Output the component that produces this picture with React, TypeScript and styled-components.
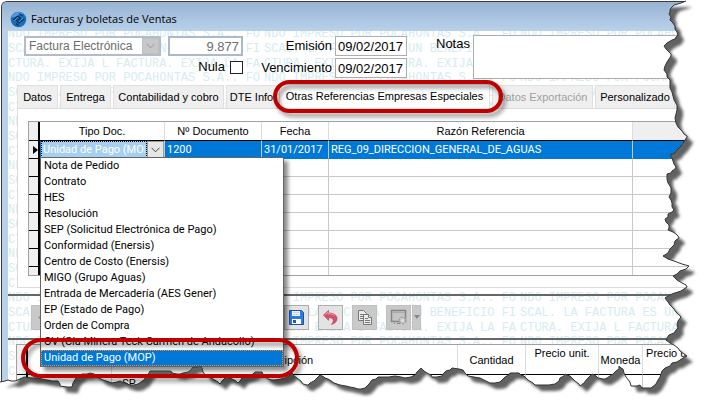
import React from "react";
import styled, { createGlobalStyle, css } from "styled-components";

const Global = createGlobalStyle`
  * { box-sizing: border-box; }
  body { margin: 0; background: #fff; overflow: hidden; }
  button, input, select, textarea { font: inherit; color: inherit; margin: 0; border-radius: 0; }
`;

const Page = styled.main`
  position: relative;
  min-height: 100vh;
  padding: 1px 0 0 1px;
  overflow: hidden;
  font: 11px/16px "Liberation Sans", Arial, sans-serif;
  color: #000;
`;

const Window = styled.section`
  border: 1px solid #3c3a40;
  border-width: 1px 0 0 1px;
  border-top-left-radius: 6px;
  background: #b9d1ea;
  overflow: hidden;
`;

const TitleBar = styled.header`
  height: 29px;
  display: flex;
  align-items: center;
  gap: 4px;
  padding: 5px 0 0 8px;
  background: linear-gradient(#98b4d3, #b9d1ea);
`;

const Title = styled.h1`
  margin: 0;
  font: 400 11px/16px "Open Sans", "Noto Sans", sans-serif;
`;

const Body = styled.div`
  position: relative;
  margin-left: 6px;
  background: #fff;
`;

const Watermark = styled.div`
  position: absolute;
  inset: 0;
  overflow: hidden;
  display: grid;
  grid-template-columns: repeat(3, 256px);
  grid-auto-rows: 44px;
  align-content: start;
  padding-top: 0;
  color: #d6ecf2;
  font: 12px/15px "Liberation Mono", "Courier New", monospace;
  white-space: pre;
  pointer-events: none;
`;

const Tile = styled.div`
  margin-top: -4px;
`;

const Content = styled.div`
  position: relative;
`;

const Form = styled.div`
  display: flex;
  align-items: flex-start;
  padding: 4px 0 0 16px;
  height: 53px;
  font-size: 13px;
`;

const DocFields = styled.div`
  display: grid;
  grid-template-columns: 137px 75px;
  column-gap: 7px;
  row-gap: 2px;
  padding-top: 1px;
`;

const DateFields = styled.div`
  display: grid;
  grid-template-columns: 89px 72px;
  column-gap: 3px;
  row-gap: 2px;
  align-items: center;
  padding-top: 1px;
`;

const Label = styled.label`
  text-align: right;
  line-height: 18px;
`;

const Box = styled.input<{ $muted?: boolean }>`
  width: 100%;
  height: 20px;
  padding: 0 2px;
  border: 1px solid #abadb3;
  outline: none;
  background: #fff;
  ${(p) =>
    p.$muted &&
    css`
      border: 2px solid #abb9cc;
      color: #6d6d6d;
      text-align: right;
    `}
`;

const SelectWrap = styled.div<{ $cell?: boolean }>`
  position: relative;
  display: flex;
  height: ${(p) => (p.$cell ? "17px" : "20px")};
  border: ${(p) => (p.$cell ? "0" : "2px solid #b4bcc8")};
  background: ${(p) => (p.$cell ? "#a6d0f2" : "#fff")};
  color: ${(p) => (p.$cell ? "#fff" : "#6d6d6d")};
`;

const Select = styled.select<{ $cell?: boolean }>`
  appearance: none;
  flex: 1;
  min-width: 0;
  border: ${(p) => (p.$cell ? "1px dotted #000" : "0")};
  padding: 0 ${(p) => (p.$cell ? "1px" : "3px")};
  font-size: ${(p) => (p.$cell ? "11px" : "12px")};
  outline: none;
  background: transparent;
  opacity: 1;
  color: inherit;
`;

const Arrow = styled.span<{ $cell?: boolean }>`
  display: grid;
  place-items: center;
  width: 17px;
  background: ${(p) => (p.$cell ? "#e6e6e6" : "#c8c8c8")};
  border: 1px solid ${(p) => (p.$cell ? "#9c9c9c" : "#c0c0c0")};
  pointer-events: none;
`;

const CheckLine = styled.label`
  grid-column: 1 / 3;
  display: flex;
  justify-content: flex-end;
  align-items: center;
  gap: 5px;
  height: 18px;
`;

const Check = styled.input`
  appearance: none;
  width: 13px;
  height: 13px;
  border: 1px solid #222;
  background: #fff;
`;

const Notes = styled.div`
  flex: 1;
  display: flex;
  gap: 3px;
  margin-left: 29px;
`;

const NotesArea = styled.textarea`
  flex: 1;
  height: 44px;
  border: 1px solid #abadb3;
  background: #fff;
  resize: none;
  outline: none;
`;

const Tabs = styled.div`
  display: flex;
  align-items: flex-end;
  gap: 2px;
  margin-left: 9px;
  height: 24px;
`;

const Tab = styled.button<{ $active?: boolean; $w: number }>`
  flex: none;
  width: ${(p) => p.$w}px;
  height: ${(p) => (p.$active ? "24px" : "23px")};
  padding: ${(p) => (p.$active ? "0 0 2px" : "0")};
  border: 1px solid #e0e0e0;
  border-bottom: 0;
  background: ${(p) => (p.$active ? "#fff" : "#efefef")};
  white-space: nowrap;
  &:disabled { color: #a0a0a0; }
`;

const Panel = styled.div`
  margin-left: 9px;
  height: 180px;
  padding: 12px 0 0 10px;
  border: 1px solid #dcdcdc;
  border-right: 0;
  background: #fff;
`;

const Table = styled.table`
  width: 100%;
  table-layout: fixed;
  border-collapse: separate;
  border-spacing: 0;
  background: #fff;
  border: 1px solid #a0a0a0;
  border-right: 0;
`;

const Th = styled.th<{ $empty?: boolean; $tall?: boolean; $left?: boolean; $top?: boolean }>`
  height: ${(p) => (p.$tall ? "30px" : "19px")};
  padding: ${(p) => (p.$top ? "0 0 13px" : "0")};
  border-right: 1px solid #dcdcdc;
  border-bottom: 1px solid #000;
  font-weight: 400;
  text-align: ${(p) => (p.$left ? "left" : "center")};
  white-space: nowrap;
  overflow: hidden;
  background: ${(p) => (p.$empty ? "#efefef" : "#fff")};
`;

const Td = styled.td<{ $on?: boolean; $last?: boolean }>`
  position: relative;
  height: ${(p) => (p.$last ? "8px" : "18px")};
  padding: 0 2px;
  font-family: Roboto, "Liberation Sans", sans-serif;
  line-height: 15px;
  white-space: nowrap;
  border-right: 1px solid #c8c8c8;
  border-bottom: ${(p) => (p.$last ? "0" : "1px solid #c8c8c8")};
  ${(p) =>
    p.$on &&
    css`
      background: #0078d7;
      border-bottom-color: #0078d7;
      color: #fff;
    `}
`;

const Marker = styled.td<{ $last?: boolean }>`
  height: ${(p) => (p.$last ? "8px" : "18px")};
  padding: 0;
  background: #efefef;
  border-right: 2px solid #000;
  border-bottom: ${(p) => (p.$last ? "0" : "1px solid #000")};
  svg { display: block; margin-left: 4px; }
`;

const Corner = styled.th`
  padding: 0;
  background: #efefef;
  border-right: 2px solid #000;
  border-bottom: 1px solid #000;
`;

const CellEditor = styled.div`
  width: 123px;
  margin-left: -1px;
`;

const List = styled.ul`
  position: absolute;
  z-index: 3;
  top: 16px;
  left: 0;
  width: 244px;
  margin: 0;
  padding: 0;
  list-style: none;
  border: 1px solid #646464;
  background: #fff;
  color: #000;
  box-shadow: 4px 4px 4px rgba(0, 0, 0, 0.45);
`;

const Option = styled.li<{ $on?: boolean }>`
  padding: 0 3px 1px;
  line-height: 15px;
  ${(p) =>
    p.$on &&
    css`
      background: #0078d7;
      color: #fff;
      outline: 1px dotted #ff8728;
      outline-offset: -1px;
    `}
`;

const Toolbar = styled.div`
  display: flex;
  align-items: center;
  gap: 9px;
  height: 46px;
  margin-top: 6px;
  padding-left: 23px;
  border: 2px solid #666;
  border-width: 2px 0;
`;

const ToolButton = styled.button<{ $off?: boolean; $narrow?: boolean; $gap?: boolean }>`
  flex: none;
  display: grid;
  place-items: center;
  width: ${(p) => (p.$narrow ? "9px" : "25px")};
  height: 25px;
  padding: 0;
  margin-left: ${(p) => (p.$gap ? "219px" : p.$narrow ? "-8px" : "0")};
  border: 1px solid ${(p) => (p.$off ? "#c0c0c0" : "#adadad")};
  background: ${(p) => (p.$off ? "#c9c9c9" : "#e3e3e3")};
`;

const Items = styled.div`
  margin: 4px 0 0 8px;
`;

const Ring = styled.div<{ $x: number; $y: number; $w: number; $h: number }>`
  position: absolute;
  z-index: 6;
  left: ${(p) => p.$x}px;
  top: ${(p) => p.$y}px;
  width: ${(p) => p.$w}px;
  height: ${(p) => p.$h}px;
  border: 4px solid #c00000;
  border-radius: 20px;
  filter: drop-shadow(3px 4px 2px rgba(0, 0, 0, 0.4));
  pointer-events: none;
`;

const TearLayer = styled.svg`
  position: absolute;
  z-index: 5;
  inset: 0;
  width: 100%;
  height: 100%;
  pointer-events: none;
`;

const edge: number[][] = [
  [686,1],[674,5],[670,10],[669,14],[670,20],[675,26],[677,32],[676,37],[672,40],[664,46],[668,51],[671,56],[667,62],[664,70],[667,77],[670,83],[672,92],[674,100],[677,110],[675,118],[678,127],[684,134],[687,137],[684,142],[677,150],[670,155],[673,161],[676,167],[672,171],[667,174],[668,183],[671,188],[669,197],[672,203],[674,210],[668,214],[665,219],[669,225],[668,230],[676,234],[679,238],[675,241],[670,249],[663,256],[674,261],[689,266],[680,271],[673,276],[682,283],[687,287],[672,294],[665,298],[670,305],[676,312],[681,317],[677,325],[676,330],[669,335],[666,340],[674,345],[680,351],[687,356],[680,360],[672,363],[665,368],[661,374],[658,380],[651,388],[643,388],[640,385],[631,386],
  [626,377],[623,369],[619,366],[616,371],[610,376],[605,379],[598,378],[592,374],[587,379],[580,386],[575,381],[570,376],[565,374],[560,378],[555,384],[545,385],[535,385],[528,380],[524,376],[519,373],[510,373],[505,377],[500,382],[490,383],[480,378],[468,376],[463,370],[452,368],[446,371],[442,376],[432,377],[427,373],[421,368],[415,375],[405,378],[395,376],[385,377],[378,377],[372,380],[365,388],[358,389],[350,387],[340,385],[330,380],[325,378],[320,375],[314,381],[308,385],[303,384],[297,378],[292,373],
  [285,378],[275,380],[268,379],[262,372],[255,372],[248,376],[242,378],[238,383],[232,379],[226,377],[220,384],[213,379],[206,376],[202,368],[200,366],[193,367],[188,372],[180,374],[172,373],[170,371],[150,371],[147,375],[138,384],[130,385],[120,381],[112,383],[103,380],[97,375],[90,373],[82,374],[76,378],[72,387],[60,386],[58,381],[47,380],[37,378],[24,377],[15,381],[8,380],[0,382],
];

// Adds small nicks between the main points so that the paper edge looks ragged.
const ragged = edge.flatMap((p, i) => {
  const n = edge[i + 1];
  if (!n) return [p];
  const d = [1, -1, 0, 1, 0, -1, 1][i % 7];
  return [p, [Math.round((p[0] + n[0]) / 2) + d, Math.round((p[1] + n[1]) / 2)]];
});
const line = ragged.map((p) => p.join(" ")).join(" L");

function TornEdge() {
  return (
    <TearLayer viewBox="0 0 711 412" preserveAspectRatio="none" aria-hidden="true">
      <defs>
        <clipPath id="outside">
          <path d={`M${line} L0 412 L711 412 L711 0 L686 0Z`} />
        </clipPath>
        <filter id="soft" x="-5%" y="-5%" width="110%" height="110%">
          <feGaussianBlur stdDeviation="1.5" />
        </filter>
      </defs>
      <g clipPath="url(#outside)">
        <rect width="711" height="412" fill="#fff" />
        <path d={`M12 8 L${line} L12 376Z`} transform="translate(6 6)" fill="#626262" filter="url(#soft)" />
      </g>
      <path d={`M${line}`} fill="none" stroke="#333" />
    </TearLayer>
  );
}

function Chevron({ color }: { color: string }) {
  return (
    <svg width="9" height="6" viewBox="0 0 9 6" fill="none" stroke={color}>
      <path d="M0.5 0.8 4.5 4.8 8.5 0.8" />
    </svg>
  );
}

const Logo = () => (
  <svg width="17" height="17" viewBox="0 0 17 17" fill="none">
    <circle cx="8.5" cy="8.5" r="7.8" fill="#1b6db8" />
    <path d="M1.500 7C2.500 3 6 .9 9 .8L13 3 8 4.500z" fill="#4b9be0" />
    <path d="M3 9 8 5l3.500 3.500M14 8 9 12 5.500 8.500M8.500 8l2.500 2.500M8.500 9 6 6.500M6 12.500l2.500 2M9 2.800l3.500 2" stroke="#0a2f5e" strokeWidth="1.300" />
    <path d="M4.200 9.800 8 6.500M12.800 7.500 9 10.600" stroke="#7cc0f5" strokeWidth=".8" />
  </svg>
);

const SaveIcon = () => (
  <svg width="17" height="17" viewBox="0 0 17 17">
    <path d="M1.500 1.500h12l2 2v12h-14z" fill="#2f7be0" stroke="#1f4fa8" />
    <path d="M4 2h8v5H4z" fill="#eef6ff" />
    <path d="M4 10h9v5H4z" fill="#fff" />
    <path d="M5 11h3v3H5z" fill="#2459b5" />
    <path d="M5 3.500h6M5 5.500h6" stroke="#b7d2f2" />
  </svg>
);

const UndoIcon = () => (
  <svg width="17" height="17" viewBox="0 0 17 17">
    <path d="M1.500 6 6.500 1.500v2.500c5.500 0 8.500 2.200 8.500 5.800 0 2.600-2 4.600-5.500 5.700 1.600-2 2.100-3.300 1.800-4.500-.4-1.700-1.800-2.200-4.800-2.200v2.500z" fill="#d4526a" stroke="#b5405a" strokeWidth=".7" />
    <path d="M3 5.800 6 3.200v1.500c3 0 5 .6 6.500 1.800" fill="none" stroke="#f0a0a0" />
  </svg>
);

const CopyIcon = () => (
  <svg width="18" height="17" viewBox="0 0 18 17" fill="#ececec" stroke="#777">
    <path d="M2.500 1.500h5l3 3v7h-8z" />
    <path d="M4 5.500h4M4 7.500h4M4 9.500h4" />
    <path d="M7.500 5.500h5l3 3v7h-8z" />
    <path d="M12.500 5.500v3h3M9 9.500h3M9 11.500h5M9 13.500h5" />
  </svg>
);

const FormIcon = () => (
  <svg width="18" height="17" viewBox="0 0 18 17" fill="none" stroke="#858585">
    <path d="M1.500 1.500h14v11h-14z" fill="#c4c4c4" strokeWidth="1.500" />
    <path d="M2 3.500h13" stroke="#aaa" />
    <circle cx="12.500" cy="11.500" r="3" fill="#ddd" stroke="#a2a2a2" strokeWidth="2" strokeDasharray="2 1" />
    <path d="M7 14.500h3M4 14.500h1" />
  </svg>
);

const options = [
  "Nota de Pedido", "Contrato", "HES", "Resolución", "SEP (Solicitud Electrónica de Pago)",
  "Conformidad (Enersis)", "Centro de Costo (Enersis)", "MIGO (Grupo Aguas)",
  "Entrada de Mercadería (AES Gener)", "EP (Estado de Pago)", "Orden de Compra",
  "OV (Cía Minera Teck Carmen de Andacollo)", "Unidad de Pago (MOP)",
];

const phrase =
  "NDO IMPRESO POR POCAHONTAS S.A.. FO\nSCAL. LA FACTURA ES UN BENEFICIO FI\nCTURA. EXIJA L FACTURA. EXIJA LA FA";

const blankRows = [0, 1, 2, 3, 4, 5, 6];

export default function App() {
  return (
    <Page>
      <Global />
      <Window>
        <TitleBar>
          <Logo />
          <Title>Facturas y boletas de Ventas</Title>
        </TitleBar>
        <Body>
          <Watermark aria-hidden="true">
            {Array.from({ length: 27 }, (_, i) => <Tile key={i}>{phrase}</Tile>)}
          </Watermark>
          <Content>
            <Form>
              <DocFields>
                <SelectWrap>
                  <Select disabled aria-label="Tipo de documento"><option>Factura Electrónica</option></Select>
                  <Arrow><Chevron color="#999" /></Arrow>
                </SelectWrap>
                <Box $muted readOnly aria-label="Número" defaultValue="9.877" />
                <CheckLine>Nula <Check type="checkbox" /></CheckLine>
              </DocFields>
              <DateFields>
                <Label htmlFor="emision">Emisión</Label>
                <Box id="emision" defaultValue="09/02/2017" />
                <Label htmlFor="vencimiento">Vencimiento</Label>
                <Box id="vencimiento" defaultValue="09/02/2017" />
              </DateFields>
              <Notes>
                <Label htmlFor="notas">Notas</Label>
                <NotesArea id="notas" />
              </Notes>
            </Form>
            <Tabs role="tablist">
              <Tab role="tab" $w={41}>Datos</Tab>
              <Tab role="tab" $w={51}>Entrega</Tab>
              <Tab role="tab" $w={111}>Contabilidad y cobro</Tab>
              <Tab role="tab" $w={51}>DTE Info</Tab>
              <Tab role="tab" $w={211} $active aria-selected>Otras Referencias Empresas Especiales</Tab>
              <Tab role="tab" $w={101} disabled>Datos Exportación</Tab>
              <Tab role="tab" $w={80}>Personalizado</Tab>
            </Tabs>
            <Panel>
              <Table>
                <colgroup>
                  <col width="11" /><col width="125" /><col width="97" /><col width="67" /><col width="304" /><col />
                </colgroup>
                <thead>
                  <tr>
                    <Corner />
                    <Th>Tipo Doc.</Th><Th>Nº Documento</Th><Th>Fecha</Th><Th>Razón Referencia</Th><Th $empty />
                  </tr>
                </thead>
                <tbody>
                  <tr>
                    <Marker><svg width="5" height="8" viewBox="0 0 5 8"><path d="M0 0 5 4 0 8z" /></svg></Marker>
                    <Td $on>
                      <CellEditor>
                        <SelectWrap $cell>
                          <Select $cell aria-label="Tipo Doc." defaultValue="Unidad de Pago (MOP)">
                            {options.map((o) => <option key={o}>{o}</option>)}
                          </Select>
                          <Arrow $cell><Chevron color="#444" /></Arrow>
                        </SelectWrap>
                      </CellEditor>
                      <List role="listbox" aria-label="Tipos de documento">
                        {options.map((o, i) => (
                          <Option key={o} role="option" aria-selected={i === 12} $on={i === 12}>{o}</Option>
                        ))}
                      </List>
                    </Td>
                    <Td $on>1200</Td><Td $on>31/01/2017</Td><Td $on>REG_09_DIRECCION_GENERAL_DE_AGUAS</Td><Td $on />
                  </tr>
                  {blankRows.map((r) => (
                    <tr key={r}>
                      <Marker $last={r === 6} />
                      <Td $last={r === 6} /><Td $last={r === 6} /><Td $last={r === 6} /><Td $last={r === 6} /><Td $last={r === 6} />
                    </tr>
                  ))}
                </tbody>
              </Table>
            </Panel>
            <Toolbar role="toolbar">
              <ToolButton $off aria-label="Anterior">
                <svg width="11" height="9" viewBox="0 0 11 9" fill="none" stroke="#888"><path d="M5 .5 1 4.500l4 4M1 4.500h10" /></svg>
              </ToolButton>
              <ToolButton $gap aria-label="Guardar"><SaveIcon /></ToolButton>
              <ToolButton aria-label="Deshacer"><UndoIcon /></ToolButton>
              <ToolButton $off aria-label="Copiar"><CopyIcon /></ToolButton>
              <ToolButton $off aria-label="Opciones"><FormIcon /></ToolButton>
              <ToolButton $off $narrow aria-label="Más opciones">
                <svg width="6" height="4" viewBox="0 0 6 4"><path d="M0 0h6L3 4z" fill="#888" /></svg>
              </ToolButton>
            </Toolbar>
            <Items>
              <Table>
                <colgroup>
                  <col width="11" /><col width="84" /><col width="346" /><col width="68" /><col width="73" /><col width="44" /><col />
                </colgroup>
                <thead>
                  <tr>
                    <Corner />
                    <Th $tall>Producto</Th><Th $tall>Descripción</Th><Th $tall>Cantidad</Th>
                    <Th $tall $top>Precio unit.</Th><Th $tall>Moneda</Th><Th $tall $top $left>&nbsp;Precio unit.</Th>
                  </tr>
                </thead>
                <tbody>
                  <tr><Marker /><Td>1</Td><Td>&nbsp;&nbsp;&nbsp;SP</Td><Td /><Td /><Td /><Td /></tr>
                  <tr><Marker /><Td /><Td /><Td /><Td /><Td /><Td /></tr>
                </tbody>
              </Table>
            </Items>
          </Content>
        </Body>
      </Window>
      <TornEdge />
      <Ring $x={273} $y={80} $w={230} $h={33} />
      <Ring $x={21} $y={338} $w={278} $h={40} />
    </Page>
  );
}
